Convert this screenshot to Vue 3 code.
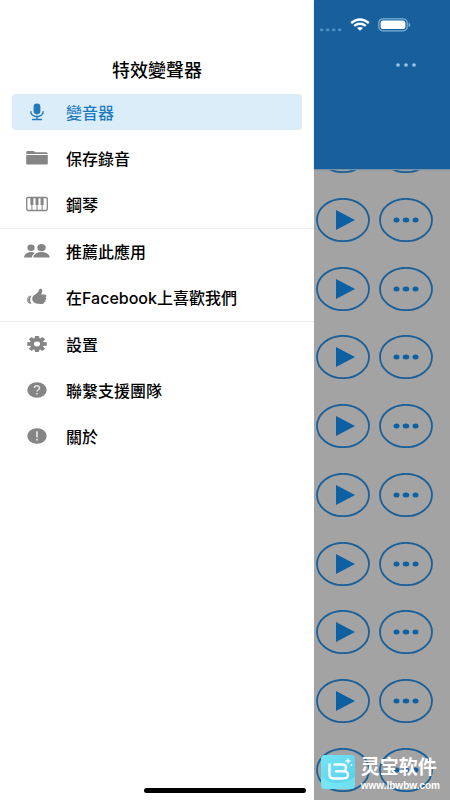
<script setup>
const sections = [
  [
    { icon: 'mic', label: '變音器', active: true },
    { icon: 'folder', label: '保存錄音' },
    { icon: 'piano', label: '鋼琴' }
  ],
  [
    { icon: 'people', label: '推薦此應用' },
    { icon: 'thumb', label: '在Facebook上喜歡我們' }
  ],
  [
    { icon: 'gear', label: '設置' },
    { icon: 'help', label: '聯繫支援團隊' },
    { icon: 'info', label: '關於' }
  ]
]
const effectCount = 10
</script>

<template>
  <div class="screen">
    <nav class="drawer" aria-labelledby="app-title">
      <h1 id="app-title" class="title">特效變聲器</h1>
      <ul v-for="(items, s) in sections" :key="s" class="section">
        <li v-for="item in items" :key="item.label">
          <a href="#" class="item" :class="{ active: item.active }">
            <svg class="icon" viewBox="0 0 28 20" aria-hidden="true">
              <g v-if="item.icon === 'mic'">
                <rect x="10.6" y="1.6" width="6.8" height="10.8" rx="3.3" />
                <path d="M7.800 9.200c0 7.200 12.400 7.200 12.400 0M14 14.800v3M9 17.600h10" fill="none" stroke="currentColor" stroke-width="1.500" />
              </g>
              <g v-else-if="item.icon === 'folder'">
                <path d="M3.2 6V4.500q0-1.400 1.400-1.400h6l2 1.200h10.600q1.600 0 1.600 1.700z" />
                <path d="M3.2 6.900h21.600v8.300q0 1.400-1.400 1.400H4.600q-1.400 0-1.400-1.400z" />
              </g>
              <g v-else-if="item.icon === 'piano'">
                <rect x="3.700" y="3.500" width="20.600" height="13" rx="1.400" fill="none" stroke="currentColor" stroke-width="1.300" />
                <path d="M8.900 10v6M14 10v6M19.100 10v6" stroke="currentColor" />
                <path d="M7.400 4h3v7h-3zM12.500 4h3v7h-3zM17.600 4h3v7h-3z" />
              </g>
              <g v-else-if="item.icon === 'people'">
                <ellipse cx="8" cy="6.800" rx="3.600" ry="3.200" />
                <ellipse cx="18.500" cy="6.600" rx="4.200" ry="3.700" />
                <path d="M1 16.600c.4-3.800 3.600-5.600 7-5.600 1.500 0 2.800.3 3.800 1-1.800 1.200-2.800 2.700-3 4.600z" />
                <path d="M10.200 16.600c.4-3.900 4.200-5.600 8.300-5.600s7.800 1.700 8.300 5.600z" />
              </g>
              <g v-else-if="item.icon === 'thumb'">
                <path d="M10.500 8.600c2.400-1 4.800-3 5.600-5.800.5-1.700 3.100-1.500 3.200.6 0 1.700-.8 2.900-1.100 4h3.400c2 0 2.300 2.300.9 2.900 1.200.7 1 2.200-.2 2.600.6 1 0 2.100-1.100 2.300-.2 1.300-1.200 1.800-2.800 1.800-3.900.1-6.400-.3-8.300-2.400-1.300-1.600-1.200-4.400.4-6z" />
                <path d="M8.600 8.400c-4.400.6-4.800 7.800 0 8.400-1.900-2.500-1.900-5.900 0-8.400z" />
                <path d="M6.800 9c-3.200 1.200-3.200 6.200 0 7.400" fill="none" stroke="currentColor" />
              </g>
              <g v-else-if="item.icon === 'gear'">
                <ellipse cx="14" cy="10" rx="5" ry="4.300" fill="none" stroke="currentColor" stroke-width="3.800" />
                <path d="M12 1.900h4l.5 3.400h-5zM12 18.100h4l.5-3.400h-5zM4.200 8.300v3.400l3.600.4V7.900zM23.800 8.300v3.400l-3.600.4V7.900zM5.800 5.200l2.800-2.200 2.600 2.100-3 2.700zM22.200 5.200l-2.800-2.200-2.600 2.100 3 2.700zM5.800 14.800l2.800 2.200 2.600-2.100-3-2.700zM22.200 14.800l-2.800 2.200-2.600-2.100 3-2.700z" />
              </g>
              <g v-else>
                <ellipse cx="14" cy="10" rx="9.700" ry="7.800" />
                <g fill="none" stroke="#e4e4e4" stroke-width="1.500">
                  <path v-if="item.icon === 'help'" d="M11.400 8c.1-3 5.200-2.800 5.100 0 0 1.800-2.500 1.700-2.500 3.600M14 12.900v1.600" />
                  <path v-else d="M14 5.300v6M14 12.800v1.700" stroke-width="1.800" />
                </g>
              </g>
            </svg>
            <span class="label">{{ item.label }}</span>
          </a>
        </li>
      </ul>
    </nav>

    <main class="content">
      <header class="topbar">
        <div class="status">
          <svg class="signal" viewBox="0 0 22 4" aria-hidden="true">
            <rect v-for="n in 4" :key="n" :x="n * 6 - 6" y="0.5" width="3.400" height="2.800" rx="1.200" />
          </svg>
          <svg class="wifi" viewBox="0 0 20 14" aria-hidden="true">
            <path d="M1.200 5q8.800-7 17.600 0" />
            <path d="M4.200 7.900q5.800-4.300 11.600 0" />
            <path d="M7 10l3 2.800 3-2.800q-3-2-6 0z" class="solid" />
          </svg>
          <svg class="battery" viewBox="0 0 34 14" aria-hidden="true">
            <rect x="0.800" y="0.800" width="28.400" height="12" rx="4" class="shell" />
            <rect x="2.600" y="2.600" width="24.800" height="8.400" rx="2.600" fill="#fff" />
            <path d="M30.600 4.500c2.300.6 2.300 4 0 4.600z" fill="#6eb2e4" />
          </svg>
        </div>
        <button class="more" type="button" aria-label="更多">
          <svg viewBox="0 0 22 4" aria-hidden="true">
            <circle v-for="n in 3" :key="n" :cx="n * 8 - 5" cy="2" r="1.800" />
          </svg>
        </button>
      </header>
      <ul class="effects">
        <li v-for="n in effectCount" :key="n" class="effect">
          <button class="round" type="button" aria-label="播放">
            <svg viewBox="0 0 54 44" aria-hidden="true">
              <ellipse cx="27" cy="22" rx="26" ry="21.200" class="ring" />
              <path d="M20 12l19 10-19 10z" />
            </svg>
          </button>
          <button class="round" type="button" aria-label="選項">
            <svg viewBox="0 0 54 44" aria-hidden="true">
              <ellipse cx="27" cy="22" rx="26" ry="21.200" class="ring" />
              <ellipse cx="17.500" cy="22" rx="3" ry="2.500" />
              <ellipse cx="27" cy="22" rx="3.300" ry="2.500" />
              <ellipse cx="36.500" cy="22" rx="3" ry="2.500" />
            </svg>
          </button>
        </li>
      </ul>
    </main>

    <div class="home-bar"></div>

    <div class="badge">
      <svg class="logo" viewBox="0 0 34 34" aria-hidden="true">
        <defs>
          <linearGradient id="badge-fill" x1="0" y1="0" x2="1" y2="1">
            <stop offset="0" stop-color="#74e6f3" />
            <stop offset="1" stop-color="#52cdee" />
          </linearGradient>
        </defs>
        <rect width="34" height="34" rx="4" fill="url(#badge-fill)" />
        <path d="M0 22q14 12 34 0v8q0 4-4 4H4q-4 0-4-4z" fill="#8af0f6" opacity="0.500" />
        <g fill="none" stroke="#fff" stroke-width="2.400" stroke-linejoin="round" stroke-linecap="round">
          <path d="M8.500 9.500v10q0 4 4 4h10q4.500 0 4.500-3.700t-4.500-3.500H15M13.500 9.500h7.500q4 0 4 3.200t-4 3.600" />
        </g>
        <path d="M27 3.500v5M24.500 6h5M30.500 9v2" stroke="#fff" stroke-width="1.300" />
      </svg>
      <div class="badge-text">
        <strong>灵宝软件</strong>
        <span>www.lbwbw.com</span>
      </div>
    </div>
  </div>
</template>

<style>
body {
  margin: 0;
}
</style>

<style scoped>
.screen {
  position: relative;
  display: flex;
  height: 100vh;
  overflow: hidden;
  background: #fff;
  font-family: Inter, "Noto Sans CJK TC", sans-serif;
}
ul {
  list-style: none;
  margin: 0;
  padding: 0;
}
button {
  padding: 0;
  border: 0;
  background: none;
}
svg {
  display: block;
}
.drawer {
  flex: 1;
  background: #fff;
}
.title {
  margin: 0;
  padding: 58px 0 10px;
  font-size: 18px;
  line-height: 26px;
  font-weight: 500;
  text-align: center;
  color: #000;
}
.section {
  display: flex;
  flex-direction: column;
  gap: 10px;
  padding: 0 12px;
}
.section + .section {
  margin-top: 6px;
  padding-top: 4px;
  border-top: 1px solid #ececec;
}
.item {
  display: flex;
  align-items: center;
  gap: 15px;
  height: 36px;
  padding-left: 11px;
  border-radius: 4px;
  font-size: 16px;
  line-height: 24px;
  font-weight: 500;
  color: #000;
  text-decoration: none;
  white-space: nowrap;
}
.label {
  padding-top: 1px;
}
.icon {
  width: 28px;
  height: 20px;
  fill: currentColor;
  color: #858585;
}
.active {
  background: #dcedfa;
  color: #1c7bc0;
}
.active .icon {
  color: #2579bb;
}
.content {
  display: flex;
  flex-direction: column;
  width: 136px;
  background: #a3a3a3;
}
.topbar {
  position: relative;
  z-index: 1;
  flex: none;
  display: flex;
  flex-direction: column;
  height: 169px;
  background: #17609b;
  box-shadow: 0 1px 1px #7893a8;
}
.status {
  display: flex;
  align-items: center;
  padding: 18px 0 0 6px;
}
.signal {
  width: 22px;
  height: 4px;
  margin: 9px 8px 0 0;
  fill: #4c90c4;
}
.wifi {
  width: 20px;
  height: 14px;
  margin-right: 8px;
  fill: none;
  stroke: #fff;
  stroke-width: 2.4;
}
.wifi .solid {
  fill: #fff;
  stroke: none;
}
.battery {
  width: 34px;
  height: 14px;
}
.shell {
  fill: none;
  stroke: #7fb3dc;
  stroke-width: 1.2;
}
.more {
  align-self: flex-end;
  margin: 24px 33px 0 0;
  padding: 7px 0;
}
.more svg {
  width: 22px;
  height: 4px;
  fill: #9cc6e6;
}
.effects {
  flex: 1;
  display: flex;
  flex-direction: column;
  justify-content: space-between;
  margin-top: -40px;
  padding: 0 17px 8px 2px;
}
.effect {
  display: flex;
  gap: 9px;
}
.round svg {
  width: 54px;
  height: 44px;
  fill: #0d61a2;
}
.round .ring {
  fill: none;
  stroke: #1b6099;
  stroke-width: 1.8;
}
.home-bar {
  position: absolute;
  left: 50%;
  bottom: 7px;
  width: 162px;
  height: 5px;
  margin-left: -81px;
  border-radius: 3px;
  background: #000;
}
.badge {
  position: absolute;
  z-index: 2;
  right: 10px;
  bottom: 8px;
  display: flex;
  align-items: center;
  gap: 6px;
  color: #fff;
}
.logo {
  width: 34px;
  height: 34px;
}
.badge-text {
  display: flex;
  flex-direction: column;
}
.badge-text strong {
  font: 700 19px/28px "Noto Sans CJK SC", sans-serif;
}
.badge-text span {
  font: 700 10px/12px "Liberation Sans", sans-serif;
}
</style>
